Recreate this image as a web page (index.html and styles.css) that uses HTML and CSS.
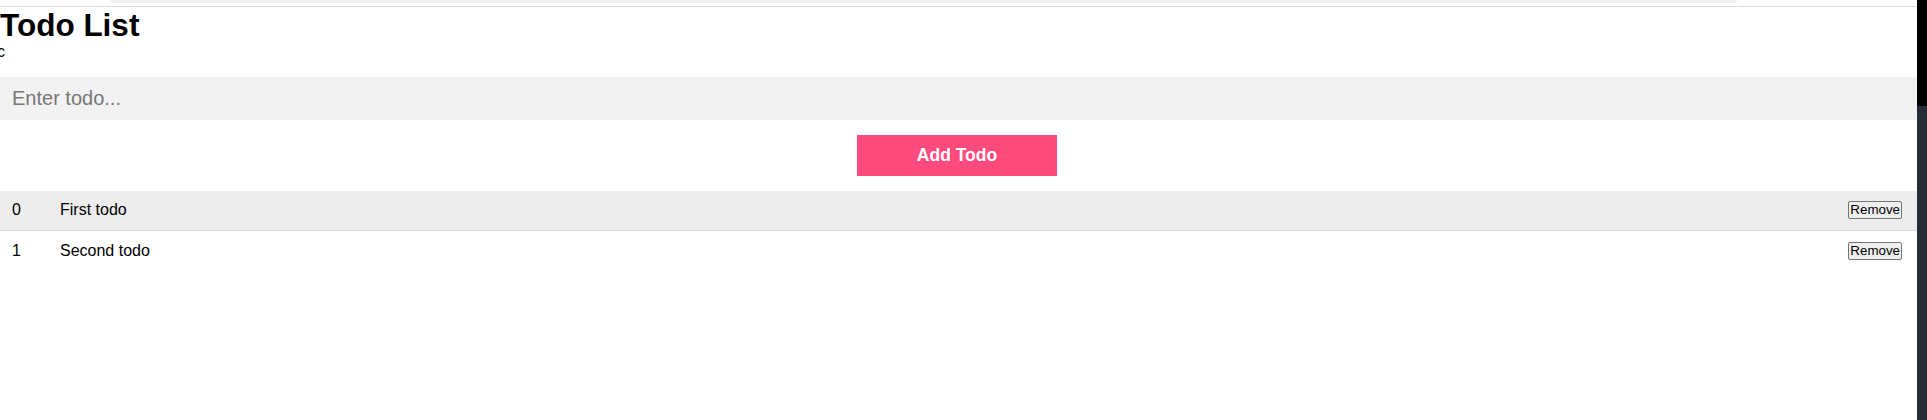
FILE: index.html
```html
<!DOCTYPE html>
<html lang="en">
<head>
<meta charset="utf-8">
<title>Todo List</title>
<link rel="stylesheet" href="styles.css">
</head>
<body>
<div class="frame">
  <main class="page">
    <div class="topbar"><div class="tab"></div></div>
    <h1 class="title">Todo List</h1>
    <div class="sub">c</div>
    <input class="todo-input" type="text" placeholder="Enter todo...">
    <div class="actions"><button class="add-btn">Add Todo</button></div>
    <ul class="todos">
      <li class="todo odd"><span class="idx">0</span><span class="text">First todo</span><button class="remove">Remove</button></li>
      <li class="todo"><span class="idx">1</span><span class="text">Second todo</span><button class="remove">Remove</button></li>
    </ul>
  </main>
  <aside class="side"><div class="side-top"></div></aside>
</div>
</body>
</html>
```

FILE: styles.css
```css
* { box-sizing: border-box; }
html, body { margin: 0; padding: 0; height: 100%; }
body {
  font-family: "Liberation Sans", Arial, sans-serif;
  color: #000;
  background: #fff;
  overflow: hidden;
}
.frame {
  display: flex;
  height: 420px;
}
.page {
  flex: 1;
  min-width: 0;
  display: flex;
  flex-direction: column;
}
.side {
  width: 10px;
  background: #272c35;
  display: flex;
  flex-direction: column;
}
.side-top {
  height: 106px;
  background: #000;
}
.topbar {
  height: 7px;
  border-bottom: 1px solid #dcdcdc;
}
.tab {
  margin-left: 110px;
  width: 1627px;
  height: 3px;
  background: #f0f0f0;
  border-radius: 0 0 6px 6px;
}
.title {
  margin: 0;
  font-size: 31.5px;
  line-height: 36px;
  font-weight: bold;
}
.sub {
  font-size: 16px;
  line-height: 18px;
  margin-left: -3px;
}
.todo-input {
  margin-top: 16px;
  height: 43px;
  width: 100%;
  border: none;
  outline: none;
  background: #f2f2f2;
  padding: 0 12px;
  font-family: "Liberation Sans", Arial, sans-serif;
  font-size: 20px;
  color: #000;
}
.todo-input::placeholder { color: #777; }
.actions {
  margin-top: 15px;
  display: flex;
  justify-content: center;
  padding-right: 3px;
}
.add-btn {
  width: 200px;
  height: 41px;
  border: none;
  background: #ff4a7d;
  color: #fff;
  font-family: "Liberation Sans", Arial, sans-serif;
  font-size: 17.5px;
  font-weight: bold;
  padding: 0;
}
.todos {
  list-style: none;
  margin: 15px 0 0;
  padding: 0;
}
.todo {
  display: flex;
  align-items: center;
  height: 40px;
  padding: 0 15px 1px 12px;
  border-bottom: 1px solid #d9d9d9;
  font-size: 16px;
}
.todo:last-child { border-bottom: none; }
.todo.odd { background: #ededed; }
.idx { width: 48px; }
.text { flex: 1; }
.remove {
  font-family: "Liberation Sans", Arial, sans-serif;
  font-size: 13.333px;
  height: 18px;
  line-height: 14px;
  padding: 0 1px;
  border: 1px solid #767676;
  border-radius: 2px;
  background: #efefef;
  color: #000;
}
```
